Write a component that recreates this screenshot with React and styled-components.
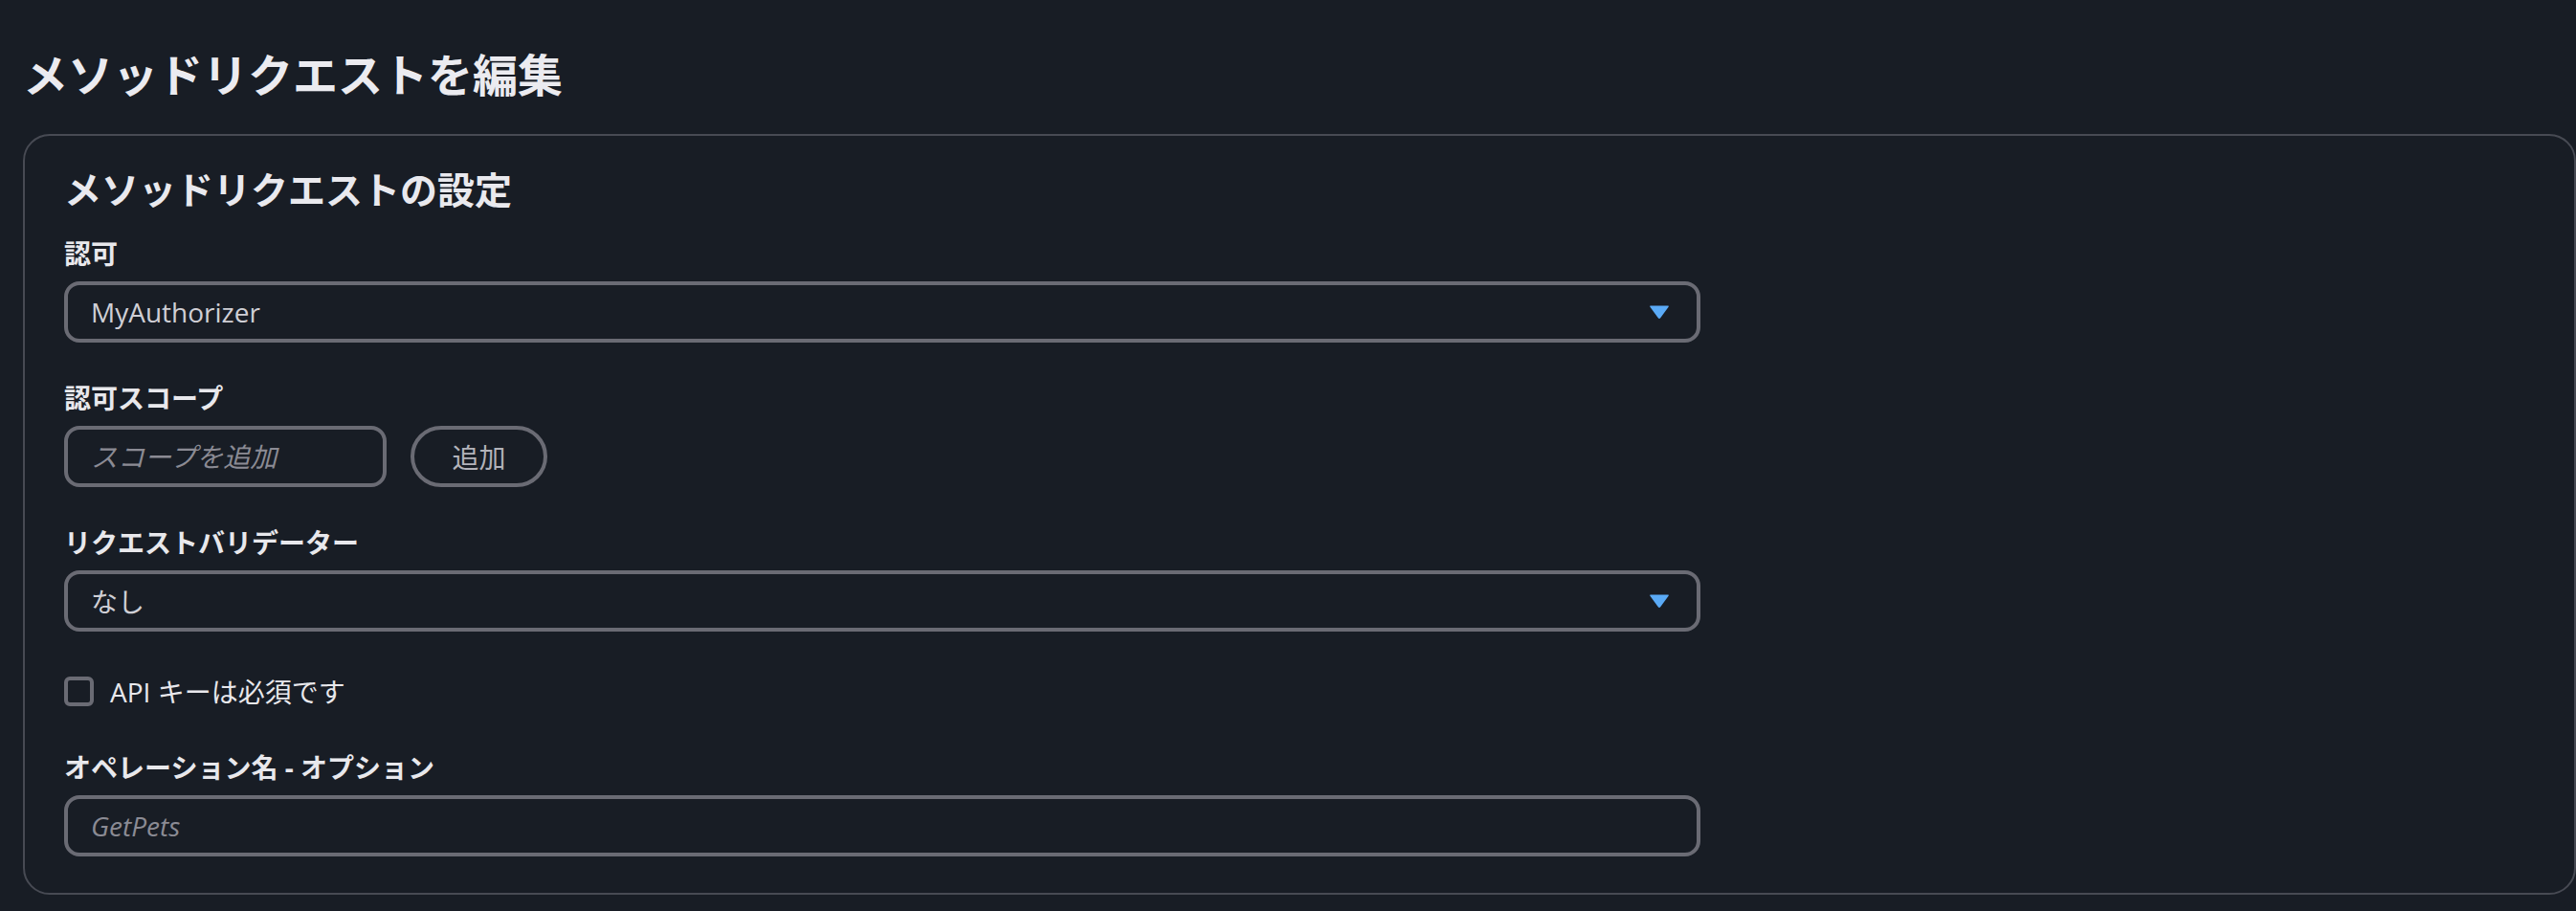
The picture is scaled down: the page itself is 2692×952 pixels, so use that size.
import React, { useState } from "react";
import styled, { createGlobalStyle } from "styled-components";

const GlobalStyle = createGlobalStyle`
  html, body {
    margin: 0;
    padding: 0;
    background: #181d25;
  }
  body {
    font-family: "Open Sans", "Noto Sans CJK JP", sans-serif;
    color: #e8e8ed;
  }
`;

const Page = styled.div`
  padding: 49px 0 16px 24px;
  background: #181d25;
  min-height: 952px;
  box-sizing: border-box;
`;

const Title = styled.h1`
  margin: 0 0 33px 0;
  font-size: 47px;
  line-height: 58px;
  font-weight: 700;
  color: #ebebf0;
`;

const Card = styled.section`
  border: 2px solid #474a53;
  border-radius: 28px;
  padding: 32px 40px 38px 41px;
  box-sizing: border-box;
`;

const CardHeading = styled.h2`
  margin: 0 0 25px 0;
  font-size: 39px;
  line-height: 48px;
  font-weight: 700;
  color: #e9e9ee;
`;

const Fields = styled.div`
  display: flex;
  flex-direction: column;
  gap: 40px;
`;

const Field = styled.div`
  display: flex;
  flex-direction: column;
`;

const Label = styled.label`
  font-size: 28px;
  line-height: 36px;
  font-weight: 700;
  color: #e8e8ec;
  margin-bottom: 11px;
`;

const SelectBox = styled.div`
  width: 1710px;
  height: 64px;
  box-sizing: border-box;
  border: 4px solid #6a6b74;
  border-radius: 16px;
  display: flex;
  align-items: center;
  justify-content: space-between;
  padding: 0 28px 0 24px;
  font-size: 28px;
  color: #cfcfd5;
  cursor: pointer;
`;

const Caret = () => (
  <svg width="22" height="16" viewBox="0 0 22 16">
    <path d="M2 1.5 H20 Q21.5 1.5 20.6 2.8 L12.2 14.2 Q11 15.6 9.8 14.2 L1.4 2.8 Q0.5 1.5 2 1.5 Z" fill="#5aaaf6" />
  </svg>
);

const Row = styled.div`
  display: flex;
  align-items: center;
  gap: 25px;
`;

const TextInput = styled.input`
  width: ${(p) => p.$width || "1710px"};
  height: 64px;
  box-sizing: border-box;
  border: 4px solid #6a6b74;
  border-radius: 16px;
  background: transparent;
  padding: 0 20px 0 24px;
  font-family: "Open Sans", "Noto Sans CJK JP", sans-serif;
  font-size: 28px;
  color: #e8e8ec;
  outline: none;

  &::placeholder {
    color: #8b8b94;
    font-style: italic;
  }
`;

const PillButton = styled.button`
  height: 64px;
  width: 143px;
  box-sizing: border-box;
  border: 4px solid #6a6b74;
  border-radius: 32px;
  background: transparent;
  font-family: "Open Sans", "Noto Sans CJK JP", sans-serif;
  font-size: 28px;
  color: #b3b3ba;
  cursor: pointer;
`;

const CheckRow = styled.label`
  display: flex;
  align-items: center;
  gap: 17px;
  height: 44px;
  font-size: 28px;
  color: #e8e8ec;
  cursor: pointer;
`;

const Box = styled.span`
  width: 31px;
  height: 31px;
  box-sizing: border-box;
  border: 4px solid #6a6b74;
  border-radius: 6px;
  background: ${(p) => (p.$checked ? "#5aaaf6" : "transparent")};
`;

const App = () => {
  const [apiKey, setApiKey] = useState(false);

  return (
    <>
      <GlobalStyle />
      <Page>
        <Title>メソッドリクエストを編集</Title>
        <Card>
          <CardHeading>メソッドリクエストの設定</CardHeading>
          <Fields>
            <Field>
              <Label>認可</Label>
              <SelectBox>
                <span>MyAuthorizer</span>
                <Caret />
              </SelectBox>
            </Field>
            <Field>
              <Label>認可スコープ</Label>
              <Row>
                <TextInput $width="337px" placeholder="スコープを追加" />
                <PillButton>追加</PillButton>
              </Row>
            </Field>
            <Field>
              <Label>リクエストバリデーター</Label>
              <SelectBox>
                <span>なし</span>
                <Caret />
              </SelectBox>
            </Field>
            <CheckRow onClick={() => setApiKey(!apiKey)}>
              <Box $checked={apiKey} />
              <span>API キーは必須です</span>
            </CheckRow>
            <Field>
              <Label>オペレーション名 - オプション</Label>
              <TextInput placeholder="GetPets" />
            </Field>
          </Fields>
        </Card>
      </Page>
    </>
  );
};

export default App;
